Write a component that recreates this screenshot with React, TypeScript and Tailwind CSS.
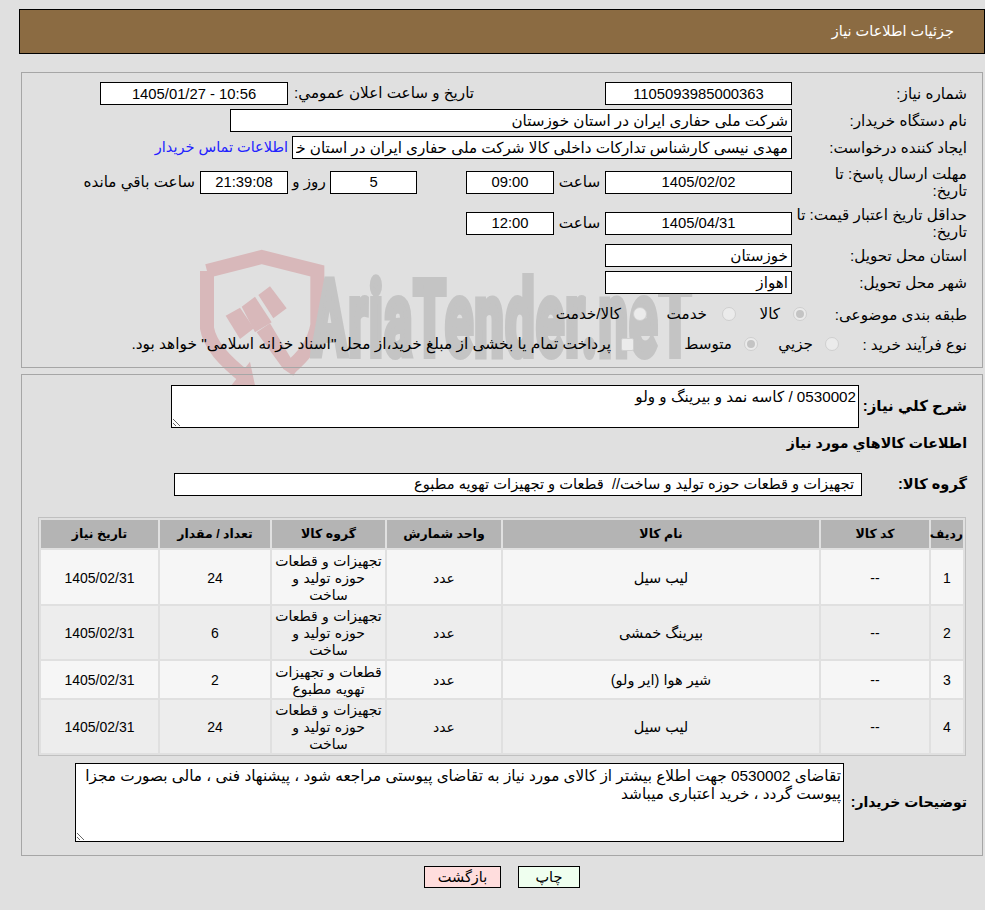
import React from "react";

const box = "border border-black bg-white h-[23px] text-[14.8px] text-black outline-none px-[3px]";
const fa = "text-[15.2px]";

function Watermark() {
  return (
    <div className="absolute left-[190px] top-[245px] w-[540px] h-[145px] pointer-events-none z-0">
      <svg width="150" height="145" viewBox="0 0 450 435" className="absolute left-0 top-0">
        <path
          d="M51 78 L215 36 L382 78 L382 240 C372 295 345 330 296 372 M51 78 L51 250 C60 300 100 345 170 400"
          fill="none"
          stroke="#d8b8ba"
          strokeWidth="42"
        />
        <g fill="#d8b8ba">
          <path d="M107 212 L150 188 L192 250 L150 282 Z" />
          <path d="M155 185 L195 155 L245 232 L195 262 Z" />
          <path d="M205 150 L240 124 L290 190 L250 220 Z" />
          <path d="M200 262 L240 235 L322 372 L310 392 L280 372 Z" />
          <path d="M180 350 L198 435 L125 420 Z" />
        </g>
      </svg>
      <div
        className="absolute left-[122px] top-[10px] font-['Roboto',sans-serif] font-bold text-[104px] leading-[130px] text-[#c4c4c4] whitespace-nowrap origin-left scale-x-[0.5] [-webkit-text-stroke:8px_#c4c4c4] tracking-[3px]"
        dir="ltr"
      >
        AriaTender.neT
      </div>
    </div>
  );
}

function Row({ h, children }: { h: string; children: React.ReactNode }) {
  return <div className={`flex items-center ${h}`}>{children}</div>;
}

function Label({ children, className = "pl-[10px]" }: { children: React.ReactNode; className?: string }) {
  return <div className={`w-[175px] shrink-0 text-[15.2px] leading-[17px] ${className}`}>{children}</div>;
}

function Radio({ on, className = "" }: { on?: boolean; className?: string }) {
  return (
    <span className={`shrink-0 w-[14px] h-[14px] rounded-full bg-[#ebebeb] border border-[#cfcfcf] flex items-center justify-center ${className}`}>
      {on && <span className="w-[8px] h-[8px] rounded-full bg-[#c4c4c4]" />}
    </span>
  );
}

const group = "تجهیزات و قطعات\nحوزه تولید و\nساخت";
const rows = [
  ["1", "--", "لیب سیل", "عدد", group, "24", "1405/02/31", "h-[54px]", "bg-[#f6f6f6]"],
  ["2", "--", "بیرینگ خمشی", "عدد", group, "6", "1405/02/31", "h-[53px]", "bg-[#ededed]"],
  ["3", "--", "شیر هوا (ایر ولو)", "عدد", "قطعات و تجهیزات\nتهویه مطبوع", "2", "1405/02/31", "h-[37px]", "bg-[#f6f6f6]"],
  ["4", "--", "لیب سیل", "عدد", group, "24", "1405/02/31", "h-[53px]", "bg-[#ededed]"],
];

const heads = [
  ["ردیف", "w-[32px]"],
  ["کد کالا", "w-[108px]"],
  ["نام کالا", "w-[316px]"],
  ["واحد شمارش", "w-[114px]"],
  ["گروه کالا", "w-[113px]"],
  ["تعداد / مقدار", "w-[110px]"],
  ["تاریخ نیاز", "w-[117px]"],
];

export default function App() {
  return (
    <div dir="rtl" className="relative min-h-[910px] w-[985px] overflow-hidden bg-[#e0e0e0] font-['Liberation_Sans','DejaVu_Sans',sans-serif] text-black pt-[9px]">
      <Watermark />
      <div className="relative z-10 w-[966px] h-[45px] bg-[#8b6b42] border border-black flex items-center pr-[30px] text-white text-[14.5px]">
        جزئیات اطلاعات نیاز
      </div>

      <section className="relative z-10 mr-[2px] mt-[18px] w-[962px] h-[296px] border border-[#a6a6a6] pr-[15px] pt-[9px]">
        <Row h="h-[23px]">
          <Label>شماره نیاز:</Label>
          <input readOnly value="1105093985000363" className={`${box} w-[187px] text-center`} />
          <div className={`w-[181px] mr-[131px] shrink-0 whitespace-nowrap ${fa}`}>تاریخ و ساعت اعلان عمومي:</div>
          <input readOnly value="1405/01/27 - 10:56" dir="ltr" className={`${box} w-[188px] mr-[5px] text-center`} />
        </Row>
        <Row h="h-[23px] mt-[4px]">
          <Label>نام دستگاه خریدار:</Label>
          <input readOnly value="شرکت ملی حفاری ایران در استان خوزستان" className={`${box} w-[562px] ${fa}`} />
        </Row>
        <Row h="h-[23px] mt-[4px]">
          <Label>ایجاد کننده درخواست:</Label>
          <input readOnly value="مهدی نیسی کارشناس تدارکات داخلی کالا شرکت ملی حفاری ایران در استان خوزستان" className={`${box} w-[500px] ${fa}`} />
          <a className="mr-[4px] text-[14.5px] text-[#2222ff] whitespace-nowrap">اطلاعات تماس خریدار</a>
        </Row>
        <Row h="h-[34px] mt-[6px]">
          <Label>مهلت ارسال پاسخ: تا تاریخ:</Label>
          <input readOnly value="1405/02/02" className={`${box} w-[187px] text-center h-[22px]`} />
          <div className={`w-[51px] text-center shrink-0 ${fa}`}>ساعت</div>
          <input readOnly value="09:00" className={`${box} w-[88px] text-center h-[22px]`} />
          <input readOnly value="5" className={`${box} w-[87px] mr-[49px] text-center h-[22px]`} />
          <div className={`w-[42px] text-center shrink-0 ${fa}`}>روز و</div>
          <input readOnly value="21:39:08" className={`${box} w-[88px] text-center h-[22px] bg-[#ffffe8]`} />
          <div className={`mr-[5px] whitespace-nowrap ${fa}`}>ساعت باقي مانده</div>
        </Row>
        <Row h="h-[34px] mt-[7px]">
          <Label className="pl-[2px]">حداقل تاریخ اعتبار قیمت: تا تاریخ:</Label>
          <input readOnly value="1405/04/31" className={`${box} w-[187px] text-center`} />
          <div className={`w-[51px] text-center shrink-0 ${fa}`}>ساعت</div>
          <input readOnly value="12:00" className={`${box} w-[88px] text-center`} />
        </Row>
        <Row h="h-[23px] mt-[4px]">
          <Label>استان محل تحویل:</Label>
          <input readOnly value="خوزستان" className={`${box} w-[187px] ${fa}`} />
        </Row>
        <Row h="h-[23px] mt-[4px]">
          <Label>شهر محل تحویل:</Label>
          <input readOnly value="اهواز" className={`${box} w-[187px] ${fa}`} />
        </Row>
        <Row h="h-[22px] mt-[9px]">
          <Label>طبقه بندی موضوعی:</Label>
          <Radio on className="mr-[-15px]" />
          <span className={`mr-[13px] w-[28px] ${fa}`}>کالا</span>
          <Radio className="mr-[16px]" />
          <span className={`mr-[15px] w-[46px] ${fa}`}>خدمت</span>
          <Radio className="mr-[14px]" />
          <span className={`mr-[12px] whitespace-nowrap ${fa}`}>کالا/خدمت</span>
        </Row>
        <Row h="h-[22px] mt-[8px]">
          <Label>نوع فرآیند خرید :</Label>
          <Radio className="mr-[-47px]" />
          <span className={`mr-[12px] w-[40px] ${fa}`}>جزیي</span>
          <Radio on className="mr-[15px]" />
          <span className={`mr-[12px] w-[54px] ${fa}`}>متوسط</span>
          <span className="shrink-0 w-[13px] h-[13px] bg-[#ebebeb] border border-[#cfcfcf] rounded-[2px] mr-[44px]" />
          <span className="mr-[10px] text-[15.4px] whitespace-nowrap">پرداخت تمام یا بخشی از مبلغ خرید،از محل "اسناد خزانه اسلامی" خواهد بود.</span>
        </Row>
      </section>

      <section className="relative z-10 mr-[2px] mt-[6px] w-[962px] h-[482px] border border-[#a6a6a6] pr-[15px] pt-[10px]">
        <div className="flex items-center">
          <div className="w-[108px] shrink-0 font-bold text-[15px]">شرح کلي نیاز:</div>
          <textarea readOnly defaultValue="0530002 / کاسه نمد و بیرینگ و ولو" className="border border-black bg-white w-[688px] h-[43px] resize text-[15.2px] leading-[17px] px-[2px] py-[2px] outline-none" />
        </div>
        <div className="mt-[6px] font-bold text-[14.2px] h-[19px] leading-[19px]">اطلاعات کالاهاي مورد نیاز</div>
        <div className="flex items-center mt-[20px]">
          <div className="w-[105px] shrink-0 font-bold text-[14.6px]">گروه کالا:</div>
          <div className="border border-black bg-white w-[688px] h-[23px] leading-[21px] pr-[7px] text-[14.7px] whitespace-pre">تجهیزات و قطعات حوزه تولید و ساخت//  قطعات و تجهیزات تهویه مطبوع</div>
        </div>
        <table className="mt-[21px] mr-[1px] w-[928px] border border-[#c0c0c0] border-separate border-spacing-x-[2px] border-spacing-y-[2px] table-fixed text-[14px] leading-[17px] text-center">
          <thead>
            <tr className="h-[28px]">
              {heads.map(([t, w]) => (
                <th key={t} className={`${w} bg-[#b4b4b4] font-bold text-[12.5px] p-0`}>{t}</th>
              ))}
            </tr>
          </thead>
          <tbody>
            {rows.map((r) => (
              <tr key={r[0]} className={r[7]}>
                {r.slice(0, 7).map((c, i) => (
                  <td
                    key={i}
                    className={`${r[8]} p-0 pt-[2px] ${i === 4 ? "font-['DejaVu_Sans',sans-serif] text-[14px] whitespace-pre-line" : ""} ${i === 2 ? "text-[14.5px]" : ""}`}
                  >
                    {c}
                  </td>
                ))}
              </tr>
            ))}
          </tbody>
        </table>
        <div className="flex items-center mt-[7px]">
          <div className="w-[123px] shrink-0 font-bold text-[14px]">توضیحات خریدار:</div>
          <textarea
            readOnly
            defaultValue="تقاضای 0530002 جهت اطلاع بیشتر از کالای مورد نیاز به تقاضای پیوستی مراجعه شود ، پیشنهاد فنی ، مالی بصورت مجزا پیوست گردد ، خرید اعتباری میباشد"
            className="border border-black bg-white w-[769px] h-[79px] resize text-[15.3px] leading-[18px] px-[2px] py-[3px] outline-none"
          />
        </div>
      </section>

      <div className="relative z-10 flex items-center gap-[17px] mt-[10px] pr-[405px]">
        <button className="w-[62px] h-[22px] border border-black bg-[#efffef] text-[14.5px]">چاپ</button>
        <button className="w-[77px] h-[22px] border border-black bg-[#ffdddd] text-[14.5px]">بازگشت</button>
      </div>
    </div>
  );
}
